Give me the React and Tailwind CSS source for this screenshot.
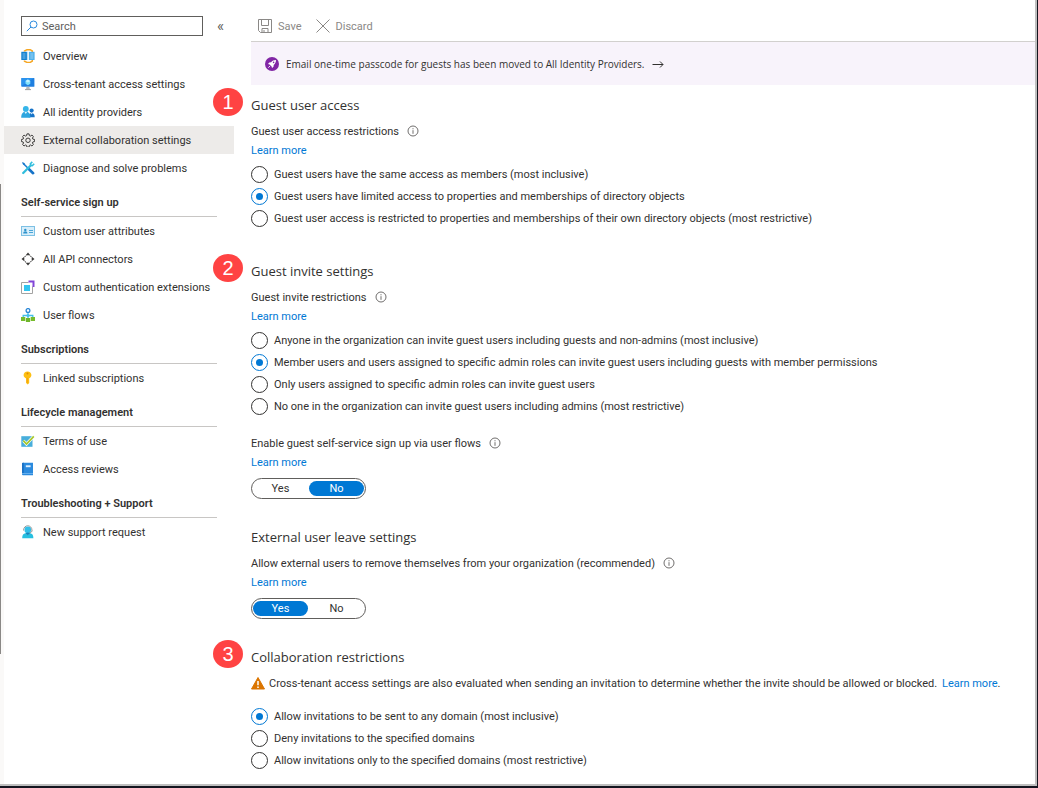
import React, { useState } from "react";

const OverviewIcon = () => (
  <svg viewBox="0 0 14 14" className="size-3.5" aria-hidden="true">
    <path d="M3.500 2.600V2L6 .7h3.200L11.300 2v1M3.500 11.600v.6L6 13.400h3.200l2.100-1.300v-1" fill="none" stroke="#f5a623" strokeWidth="1.500" />
    <rect x="0.300" y="2.800" width="5.600" height="8.200" fill="#0f7fd0" />
    <path d="M6 2.800h1.400v8.200H6z" fill="#b5dcf5" />
    <rect x="8" y="2.800" width="5.600" height="8.200" fill="#4fb0ea" />
    <path d="M1.500 5h3M1.500 7h3M1.500 9h3M9.300 5h3M9.300 7h3M9.300 9h3" stroke="#cdeafa" strokeWidth="0.600" />
  </svg>
);

const MonitorIcon = () => (
  <svg viewBox="0 0 14 14" className="size-3.5" aria-hidden="true">
    <rect x="0.400" y="1" width="13" height="8.800" rx="0.500" fill="#1f7fe0" />
    <path d="M.4 1.500a.5.5 0 0 1 .5-.5h12L.4 9z" fill="#2b93ee" />
    <path d="M6.900 2.600 9.300 4v2.800L6.900 8.200 4.500 6.800V4z" fill="#7fe0fb" />
    <path d="M6.900 2.600 9.300 4 6.900 5.400 4.500 4z" fill="#c3f1ff" />
    <path d="M5.500 9.800h2.900l.5 2.500H5z" fill="#b8b8b8" />
    <path d="M4 12.200h6v.9H4z" fill="#8f8f8f" />
  </svg>
);

const PeopleIcon = () => (
  <svg viewBox="0 0 14 14" className="size-3.5" aria-hidden="true">
    <circle cx="10.600" cy="5.600" r="2.100" fill="#1673c8" />
    <path d="M7.500 12.300c0-3 1.200-4.300 3.100-4.300s3.100 1.300 3.100 4.300z" fill="#1673c8" />
    <path d="m9.600 8.100 1 1.500 1-1.500z" fill="#d9f0ff" />
    <circle cx="4.800" cy="3.900" r="2.900" fill="#35b5e9" />
    <path d="M.2 12.800c0-4.300 1.700-6 4.600-6s4.600 1.700 4.600 6z" fill="#2ea6df" />
    <path d="m3.500 6.900 1.300 2 1.300-2z" fill="#e3f7ff" />
  </svg>
);

const GearIcon = () => (
  <svg viewBox="0 0 24 24" className="size-3.5" fill="none" stroke="#3b3a39" strokeWidth="1.700" strokeLinejoin="round" aria-hidden="true">
    <path d="M10.200 1.500h3.600l.6 3 1.800.8 2.600-1.700 2.500 2.500-1.700 2.600.8 1.800 3 .6v3.600l-3 .6-.8 1.800 1.700 2.600-2.500 2.500-2.600-1.700-1.800.8-.6 3h-3.600l-.6-3-1.800-.8-2.600 1.700-2.500-2.500 1.700-2.600-.8-1.800-3-.6v-3.600l3-.6.8-1.800-1.700-2.600 2.500-2.500 2.600 1.700 1.800-.8z" />
    <circle cx="12" cy="12.500" r="3.800" />
  </svg>
);

const ToolsIcon = () => (
  <svg viewBox="0 0 14 14" className="size-3.5" fill="none" aria-hidden="true">
    <path d="M2 2.200 11.900 12" stroke="#1b7fd0" strokeWidth="1.600" />
    <path d="m7.800 8 4.300 4.200" stroke="#1673c8" strokeWidth="2.600" strokeLinecap="round" />
    <path d="m1 1 2.400.9.6 1.300-.7.7-1.300-.7z" fill="#1673c8" />
    <path d="M2.200 12 9.700 4.500" stroke="#32bedd" strokeWidth="2.300" strokeLinecap="round" />
    <path d="M11.300.9 9.400 2.800l.3 1.600 1.600.3 1.900-1.900" stroke="#32bedd" strokeWidth="1.600" />
  </svg>
);

const CardIcon = () => (
  <svg viewBox="0 0 14 14" className="size-3.5" aria-hidden="true">
    <rect x="0.500" y="2.500" width="13" height="9" fill="#d8eefa" stroke="#7dc0e4" />
    <circle cx="4.300" cy="5.900" r="1.200" fill="#2e93cc" />
    <path d="M2.200 9.500c0-1.500.8-2.200 2.100-2.200s2.100.7 2.100 2.200z" fill="#2e93cc" />
    <path d="M8 6.500h4M8 8.500h4" stroke="#4aa6d8" />
  </svg>
);

const ConnectorsIcon = () => (
  <svg viewBox="0 0 14 14" className="size-3.5" aria-hidden="true">
    <path d="m7 .5 2.300 2.800H4.700zM7 13.500l-2.300-2.800h4.600zM.5 7l2.800-2.300v4.600zM13.500 7l-2.800 2.300V4.700z" fill="#3b3a39" />
    <path d="M3.600 5 5 3.600M9 3.600 10.400 5M10.400 9 9 10.400M5 10.400 3.600 9" stroke="#3b3a39" />
  </svg>
);

const ExtensionIcon = () => (
  <svg viewBox="0 0 14 14" className="size-3.5" aria-hidden="true">
    <path d="M7.500 2.500h-7v11h11V6.500" fill="none" stroke="#a3a3a3" />
    <rect x="3" y="5" width="6" height="6" fill="#32c5f0" />
    <path d="M7.500.4h6v6.600h-2V2.400h-4z" fill="#8246d8" />
  </svg>
);

const FlowsIcon = () => (
  <svg viewBox="0 0 14 14" className="size-3.5" aria-hidden="true">
    <path d="M7 4.500v7M2.200 10V7.500h9.600V10" fill="none" stroke="#45bfe8" strokeWidth="1.300" />
    <circle cx="7" cy="2.500" r="1.900" fill="#fff" stroke="#2a86d6" strokeWidth="1.300" />
    <circle cx="7" cy="7.400" r="1.500" fill="#45bfe8" />
    <path d="M0 9h4.300v4H0zM9.700 9H14v4H9.700z" fill="#76bc2d" />
    <path d="M4.900 10h4.200v4H4.900z" fill="#6fb52b" />
  </svg>
);

const KeyIcon = () => (
  <svg viewBox="0 0 14 14" className="size-3.5" aria-hidden="true">
    <path d="M6.500.4c2.300 0 3.900 1.500 3.900 3.600 0 1.600-.9 2.700-2.200 3.300v4.600l-1.500 1.600-1.600-1.500V7.400C3.600 6.800 2.600 5.700 2.600 4 2.600 1.900 4.200.4 6.500.4z" fill="#fdbf13" />
    <circle cx="6.500" cy="2.400" r="1" fill="#e08b00" />
    <path d="M6.200 6.800v5" stroke="#f09a0a" strokeWidth="0.900" />
  </svg>
);

const TermsIcon = () => (
  <svg viewBox="0 0 14 14" className="size-3.5" aria-hidden="true">
    <rect x="0.300" y="2.200" width="11.200" height="10.600" fill="#48aedb" />
    <path d="m2.300 6.700 3.200 3.400 7.300-7.800" fill="none" stroke="#fff" strokeWidth="3" />
    <path d="m2.300 6.700 3.200 3.400 7.300-7.800" fill="none" stroke="#a6c72b" strokeWidth="1.700" />
  </svg>
);

const BookIcon = () => (
  <svg viewBox="0 0 14 14" className="size-3.5" aria-hidden="true">
    <path d="M2 .8h10v12.400H2a1 1 0 0 1-1-1V1.800a1 1 0 0 1 1-1z" fill="#2b8ade" />
    <path d="M1 11h11v.8H1z" fill="#75b8f0" />
    <path d="M1 1.800a1 1 0 0 1 1-1h.8V11H1z" fill="#1a70c4" />
    <rect x="4.800" y="3.300" width="4.800" height="1.900" fill="#dcefff" />
  </svg>
);

const SupportIcon = () => (
  <svg viewBox="0 0 14 14" className="size-3.5" aria-hidden="true">
    <path d="M2.500 5.500c0-6.300 8.500-6.300 8.500 0" fill="none" stroke="#9a9a9a" />
    <circle cx="6.800" cy="4.900" r="3.300" fill="#32bfe8" />
    <path d="M1.200 13.200c0-3.300 1.400-4.700 3.100-4.900l2.500 1.400 2.500-1.400c1.700.2 3.100 1.600 3.100 4.900z" fill="#27bfe0" />
    <path d="m4.300 8.300 2.500 2 2.500-2-2.500-.8z" fill="#1683bd" />
    <path d="M11 5.300c0 1.500-.8 2.300-2.600 2.500" fill="none" stroke="#7a7a7a" strokeWidth="0.800" />
  </svg>
);

const InfoIcon = () => (
  <svg viewBox="0 0 12 12" className="size-3" fill="none" stroke="#605e5c" role="img" aria-label="More information">
    <circle cx="6" cy="6" r="5" strokeWidth="0.900" />
    <path d="M6 5.200v3.600M6 3.200v1.100" strokeWidth="0.900" />
  </svg>
);

const topItems = [
  { label: "Overview", Icon: OverviewIcon },
  { label: "Cross-tenant access settings", Icon: MonitorIcon },
  { label: "All identity providers", Icon: PeopleIcon },
  { label: "External collaboration settings", Icon: GearIcon, active: true },
  { label: "Diagnose and solve problems", Icon: ToolsIcon },
];

const groups = [
  {
    title: "Self-service sign up",
    items: [
      { label: "Custom user attributes", Icon: CardIcon },
      { label: "All API connectors", Icon: ConnectorsIcon },
      { label: "Custom authentication extensions", Icon: ExtensionIcon },
      { label: "User flows", Icon: FlowsIcon },
    ],
  },
  {
    title: "Subscriptions",
    items: [{ label: "Linked subscriptions", Icon: KeyIcon }],
  },
  {
    title: "Lifecycle management",
    items: [
      { label: "Terms of use", Icon: TermsIcon },
      { label: "Access reviews", Icon: BookIcon },
    ],
  },
  {
    title: "Troubleshooting + Support",
    items: [{ label: "New support request", Icon: SupportIcon }],
  },
];

const NavItem = ({ label, Icon, active }) => (
  <li>
    <a
      href="#"
      aria-current={active ? "page" : undefined}
      className={`flex h-7 items-center gap-2 pl-[17px] whitespace-nowrap ${active ? "bg-[#edebe9]" : ""}`}
    >
      <Icon />
      <span className="pt-0.5">{label}</span>
    </a>
  </li>
);

const Sidebar = () => (
  <nav className="w-[230px] shrink-0 pt-4">
    <div className="mb-1.5 flex items-center">
      <div className="ml-[17px] flex h-5 w-[182px] items-center gap-1 border border-[#605e5c] px-1">
        <svg viewBox="0 0 12 12" className="size-3 shrink-0" fill="none" stroke="#2b8ade" aria-hidden="true">
          <circle cx="7.500" cy="4.500" r="3.500" />
          <path d="M5 7 .8 11.200" />
        </svg>
        <input
          type="text"
          aria-label="Search"
          placeholder="Search"
          className="w-full min-w-0 pt-0.5 outline-none placeholder:text-[#605e5c]"
        />
      </div>
      <button type="button" aria-label="Collapse menu" className="ml-3.5 text-[15px] leading-5 text-[#605e5c]">«</button>
    </div>
    <ul>
      {topItems.map((item) => (
        <NavItem key={item.label} {...item} />
      ))}
    </ul>
    {groups.map((group) => (
      <div key={group.title}>
        <h2 className="mx-[17px] flex h-[35px] items-center border-b border-[#c8c6c4] pt-2 font-semibold">
          {group.title}
        </h2>
        <ul>
          {group.items.map((item) => (
            <NavItem key={item.label} {...item} />
          ))}
        </ul>
      </div>
    ))}
  </nav>
);

const SectionHeading = ({ step, children }) => (
  <div className="relative">
    {step && (
      <span className="absolute -top-[7px] -left-[38px] flex h-7 w-[30px] items-center justify-center rounded-[50%] bg-[#ff4343] font-['Liberation_Sans',sans-serif] text-[20px] text-white">
        {step}
      </span>
    )}
    <h2 className="font-['Open_Sans',sans-serif] text-[13px] leading-5">{children}</h2>
  </div>
);

const FieldLabel = ({ id, children }) => (
  <>
    <div className="flex h-5 items-center gap-2">
      <span id={id} className="pt-0.5">{children}</span>
      <InfoIcon />
    </div>
    <a href="#" className="block h-[18px] w-fit leading-5 text-[#0078d4]">Learn more</a>
  </>
);

const RadioGroup = ({ name, options, selected, labelledBy }) => (
  <div role="radiogroup" aria-labelledby={labelledBy} className="py-1">
    {options.map((option, index) => (
      <label key={option} className="flex h-[22px] w-fit items-center gap-1.5">
        <input
          type="radio"
          name={name}
          defaultChecked={index === selected}
          className="grid size-[17px] shrink-0 appearance-none place-items-center rounded-full border border-[#323130] before:size-[7px] before:rounded-full checked:border-[#0078d4] checked:before:bg-[#0078d4]"
        />
        <span className="pt-0.5">{option}</span>
      </label>
    ))}
  </div>
);

const YesNoToggle = ({ initial, labelledBy }) => {
  const [value, setValue] = useState(initial);

  return (
    <div
      role="group"
      aria-labelledby={labelledBy}
      className="mt-[7px] flex h-[21px] w-[115px] gap-px rounded-full border border-[#605e5c] px-px py-0.5"
    >
      {["Yes", "No"].map((option) => (
        <button
          key={option}
          type="button"
          aria-pressed={value === option}
          onClick={() => setValue(option)}
          className={`flex flex-1 items-center justify-center rounded-full ${value === option ? "bg-[#0078d4] text-white" : ""}`}
        >
          {option}
        </button>
      ))}
    </div>
  );
};

const Toolbar = () => (
  <div className="flex h-[42px] items-center gap-3.5 border-b border-[#d2d0ce] pt-2.5 pl-[7px] text-[#8a8886]">
    <button type="button" className="flex items-center gap-1.5">
      <svg viewBox="0 0 14 14" className="size-3.5" fill="none" stroke="currentColor" aria-hidden="true">
        <path d="M.5.500h13v13h-11l-2-2zM3.500.500v6h7v-6M4 13.500v-4h6v4M6 11v2.500" />
      </svg>
      <span className="pt-0.5">Save</span>
    </button>
    <button type="button" className="flex items-center gap-1.5">
      <svg viewBox="0 0 14 14" className="size-3.5" fill="none" stroke="currentColor" aria-hidden="true">
        <path d="m.5.500 13 13M13.500.500l-13 13" />
      </svg>
      <span className="pt-0.5">Discard</span>
    </button>
  </div>
);

const Banner = () => (
  <a href="#" className="flex h-[43px] items-center gap-[7px] bg-[#f8f3fb] pl-3.5 font-['Open_Sans',sans-serif] text-[10px]">
    <svg viewBox="0 0 14 14" className="size-3.5" aria-hidden="true">
      <circle cx="7" cy="7" r="7" fill="#8126a5" />
      <path d="M11 3c-2.300 0-3.700.8-4.900 2.300l-1.800.2L3 7l1.600.4 2 2L7 11l1.500-1.300.2-1.800C10.200 6.700 11 5.300 11 3z" fill="#fff" />
      <circle cx="8.600" cy="5.400" r="0.800" fill="#8126a5" />
      <path d="m3.300 10.700 1.800-1.800" stroke="#fff" strokeWidth="0.900" />
    </svg>
    Email one-time passcode for guests has been moved to All Identity Providers.
    <svg viewBox="0 0 12 12" className="size-3" fill="none" stroke="#323130" aria-hidden="true">
      <path d="M.5 6.500h10.500M8 3.500l3 3-3 3" />
    </svg>
  </a>
);

const App = () => (
  <div className="flex min-h-screen border-b-2 border-[#14151f] bg-[#14151f] pr-px font-['Roboto','Noto_Sans',sans-serif] text-[11px] leading-4 text-[#323130]">
    <div className="flex min-w-0 flex-1 border-r-2 border-b-2 border-[#bfbfbf] bg-white">
      <div className="w-1 shrink-0 bg-[#faf9f8] pt-[184px]">
        <div className="h-[470px] w-px bg-[#8a8886]" />
      </div>
      <Sidebar />
      <main className="min-w-0 flex-1 pl-[17px]">
        <Toolbar />
        <Banner />

        <section className="mt-2.5">
          <SectionHeading step="1">Guest user access</SectionHeading>
          <div className="mt-1.5">
            <FieldLabel id="guest-access">Guest user access restrictions</FieldLabel>
            <RadioGroup
              name="guest-access"
              labelledBy="guest-access"
              selected={1}
              options={[
                "Guest users have the same access as members (most inclusive)",
                "Guest users have limited access to properties and memberships of directory objects",
                "Guest user access is restricted to properties and memberships of their own directory objects (most restrictive)",
              ]}
            />
          </div>
        </section>

        <section className="mt-7">
          <SectionHeading step="2">Guest invite settings</SectionHeading>
          <div className="mt-1.5">
            <FieldLabel id="guest-invite">Guest invite restrictions</FieldLabel>
            <RadioGroup
              name="guest-invite"
              labelledBy="guest-invite"
              selected={1}
              options={[
                "Anyone in the organization can invite guest users including guests and non-admins (most inclusive)",
                "Member users and users assigned to specific admin roles can invite guest users including guests with member permissions",
                "Only users assigned to specific admin roles can invite guest users",
                "No one in the organization can invite guest users including admins (most restrictive)",
              ]}
            />
          </div>
          <div className="mt-3">
            <FieldLabel id="self-service">Enable guest self-service sign up via user flows</FieldLabel>
            <YesNoToggle initial="No" labelledBy="self-service" />
          </div>
        </section>

        <section className="mt-7">
          <SectionHeading>External user leave settings</SectionHeading>
          <div className="mt-1.5">
            <FieldLabel id="user-leave">
              Allow external users to remove themselves from your organization (recommended)
            </FieldLabel>
            <YesNoToggle initial="Yes" labelledBy="user-leave" />
          </div>
        </section>

        <section className="mt-7">
          <SectionHeading step="3">Collaboration restrictions</SectionHeading>
          <div className="mt-1.5 mb-2 flex h-5 items-center gap-1 whitespace-nowrap">
            <svg viewBox="0 0 14 14" className="size-3.5 shrink-0" aria-hidden="true">
              <path d="M7 1.500 13.500 13H.5z" fill="#db7500" stroke="#db7500" strokeLinejoin="round" />
              <path d="M7 5v4.200M7 10.500V12" stroke="#fff" strokeWidth="1.500" />
            </svg>
            <p id="collaboration" className="pt-0.5">
              Cross-tenant access settings are also evaluated when sending an invitation to determine whether the
              invite should be allowed or blocked.{" "}
              <a href="#" className="ml-0.5 text-[#0078d4]">Learn more</a>.
            </p>
          </div>
          <RadioGroup
            name="collaboration"
            labelledBy="collaboration"
            selected={0}
            options={[
              "Allow invitations to be sent to any domain (most inclusive)",
              "Deny invitations to the specified domains",
              "Allow invitations only to the specified domains (most restrictive)",
            ]}
          />
        </section>
      </main>
    </div>
  </div>
);

export default App;
